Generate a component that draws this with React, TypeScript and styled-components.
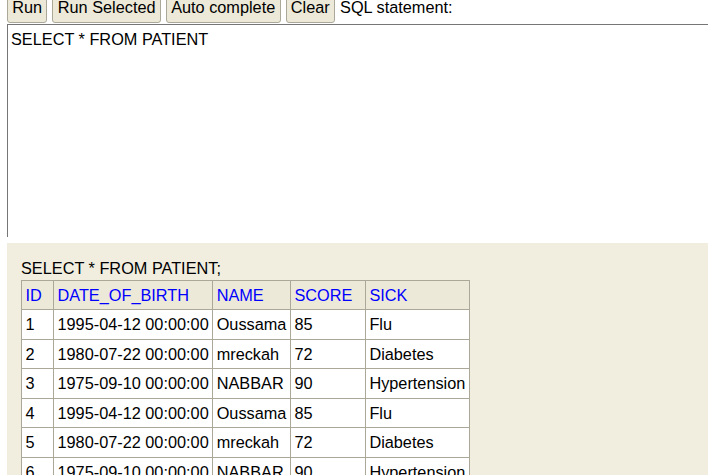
import React from "react";
import styled, { createGlobalStyle } from "styled-components";

const Global = createGlobalStyle`
  html, body { margin: 0; padding: 0; background: #ffffff; overflow: hidden; }
  body { font-family: "Liberation Sans", Arial, sans-serif; font-size: 16.3px; color: #000; }
`;

const Page = styled.div`
  width: 708px;
  height: 475px;
  display: flex;
  flex-direction: column;
  overflow: hidden;
`;

const QueryFrame = styled.div`
  height: 237px;
  flex: none;
  overflow: hidden;
  padding-left: 7px;
`;

const Toolbar = styled.div`
  display: flex;
  align-items: baseline;
  gap: 5px;
  margin-top: -9px;
  white-space: nowrap;
`;

const Button = styled.button`
  font-family: "Liberation Sans", Arial, sans-serif;
  font-size: 16.3px;
  line-height: 18px;
  color: #000;
  background: #ece9d8;
  border: 1px solid #aca899;
  border-radius: 3px;
  padding: 6px 4.3px;
  margin: 0;
`;

const Label = styled.span`
  font-size: 16.3px;
  line-height: 18px;
`;

const Editor = styled.textarea`
  display: block;
  margin: 1px 0 0 0;
  width: 820px;
  height: 320px;
  box-sizing: border-box;
  border: 1px solid #767676;
  border-radius: 0;
  padding: 5px 3px;
  font-family: "Liberation Sans", Arial, sans-serif;
  font-size: 16.3px;
  line-height: 18.5px;
  color: #000;
  background: #fff;
  resize: none;
  outline: none;
`;

const ResultFrame = styled.div`
  margin: 6px 0 0 7px;
  flex: 1;
  background: #f1eee0;
  overflow: hidden;
  padding: 16px 0 0 14px;
`;

const Statement = styled.div`
  line-height: 18px;
  margin-bottom: 3px;
`;

const Table = styled.table`
  border-collapse: collapse;
  border: 1px solid #aca899;
  font-size: 16.3px;
`;

const Th = styled.th<{ $w?: number }>`
  background: #ece9d8;
  color: #0000ff;
  font-weight: normal;
  text-align: left;
  border: 1px solid #aca899;
  padding: 5px 3.5px;
  line-height: 18px;
  white-space: nowrap;
  ${(p) => (p.$w ? `width: ${p.$w}px;` : "")}
`;

const Td = styled.td`
  background: #ffffff;
  border: 1px solid #aca899;
  padding: 5.25px 3.5px;
  line-height: 18px;
  white-space: nowrap;
`;

const columns: { name: string; w?: number }[] = [
  { name: "ID", w: 24 },
  { name: "DATE_OF_BIRTH" },
  { name: "NAME" },
  { name: "SCORE", w: 67 },
  { name: "SICK" },
];
const rows: string[][] = [
  ["1", "1995-04-12 00:00:00", "Oussama", "85", "Flu"],
  ["2", "1980-07-22 00:00:00", "mreckah", "72", "Diabetes"],
  ["3", "1975-09-10 00:00:00", "NABBAR", "90", "Hypertension"],
  ["4", "1995-04-12 00:00:00", "Oussama", "85", "Flu"],
  ["5", "1980-07-22 00:00:00", "mreckah", "72", "Diabetes"],
  ["6", "1975-09-10 00:00:00", "NABBAR", "90", "Hypertension"],
];

export default function App() {
  return (
    <Page>
      <Global />
      <QueryFrame>
        <Toolbar>
          <Button>Run</Button>
          <Button>Run Selected</Button>
          <Button>Auto complete</Button>
          <Button>Clear</Button>
          <Label>SQL statement:</Label>
        </Toolbar>
        <Editor defaultValue="SELECT * FROM PATIENT" spellCheck={false} />
      </QueryFrame>
      <ResultFrame>
        <Statement>SELECT * FROM PATIENT;</Statement>
        <Table>
          <thead>
            <tr>
              {columns.map((c) => (
                <Th key={c.name} $w={c.w}>
                  {c.name}
                </Th>
              ))}
            </tr>
          </thead>
          <tbody>
            {rows.map((r, i) => (
              <tr key={i}>
                {r.map((v, j) => (
                  <Td key={j}>{v}</Td>
                ))}
              </tr>
            ))}
          </tbody>
        </Table>
      </ResultFrame>
    </Page>
  );
}
